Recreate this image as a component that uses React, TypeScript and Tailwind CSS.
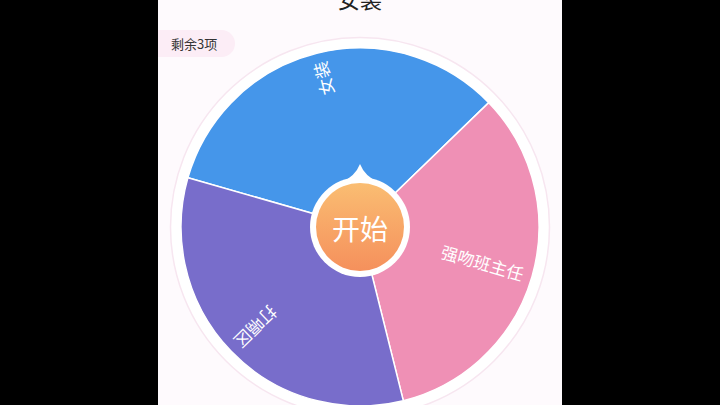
const segments = [
  { label: '女装', color: '#4596ea', from: 286, to: 46 },
  { label: '强吻班主任', color: '#ef90b5', from: 46, to: 166 },
  { label: '打嗝区', color: '#786dcb', from: 166, to: 286 },
]

const R = 179

function pt(deg: number, r: number) {
  const a = (deg * Math.PI) / 180
  return [r * Math.sin(a), -r * Math.cos(a)]
}

function Wheel() {
  return (
    <svg width="382" height="382" viewBox="-191 -191 382 382" className="block shrink-0">
      <defs>
        <linearGradient id="btn" x1="0" y1="0" x2="0" y2="1">
          <stop offset="0%" stopColor="#fabd72" />
          <stop offset="100%" stopColor="#f5905c" />
        </linearGradient>
      </defs>
      <circle cx="0" cy="0" r="189.5" fill="#ffffff" stroke="#f7e6f0" strokeWidth="1.5" />
      {segments.map((s) => {
        const [x1, y1] = pt(s.from, R)
        const [x2, y2] = pt(s.to, R)
        return (
          <path
            key={s.label}
            d={`M0 0 L${x1} ${y1} A${R} ${R} 0 0 1 ${x2} ${y2} Z`}
            fill={s.color}
            stroke="#ffffff"
            strokeWidth="1.5"
          />
        )
      })}
      {segments.map((s) => {
        const mid = s.to < s.from ? (s.from + s.to + 360) / 2 : (s.from + s.to) / 2
        return (
          <g key={s.label + 't'} transform={`rotate(${mid - 90})`}>
            <text
              x="170"
              y="0"
              textAnchor="end"
              dominantBaseline="central"
              fill="#ffffff"
              fontSize="17"
              fontFamily="'Noto Sans CJK SC', sans-serif"
            >
              {s.label}
            </text>
          </g>
        )
      })}
      {/* start button */}
      <path d="M-20 -44 Q-5 -50 0 -63 Q5 -50 20 -44 Z" fill="#ffffff" />
      <circle cx="0" cy="0" r="50" fill="#ffffff" />
      <circle cx="0" cy="0" r="44" fill="url(#btn)" />
      <text
        x="0"
        y="1"
        textAnchor="middle"
        dominantBaseline="central"
        fill="#ffffff"
        fontSize="28"
        fontFamily="'Noto Sans CJK SC', sans-serif"
      >
        开始
      </text>
    </svg>
  )
}

export default function App() {
  return (
    <div className="w-[720px] h-[405px] bg-black flex justify-center overflow-hidden">
      <div className="relative w-[404px] h-full bg-[#fefafd] flex flex-col items-center overflow-hidden">
        <div className="h-[36px] shrink-0 w-full flex justify-center">
          <span className="-mt-[13px] text-[22px] leading-[22px] text-[#222] font-['Noto_Sans_CJK_SC',sans-serif]">
            女装
          </span>
        </div>
        <Wheel />
        <div className="absolute top-[30px] left-0 h-[27px] w-[77px] pl-[13px] flex items-center rounded-r-full bg-[#fcedf6] text-[13px] text-[#333] font-['Noto_Sans_CJK_SC',sans-serif]">
          剩余3项
        </div>
      </div>
    </div>
  )
}
